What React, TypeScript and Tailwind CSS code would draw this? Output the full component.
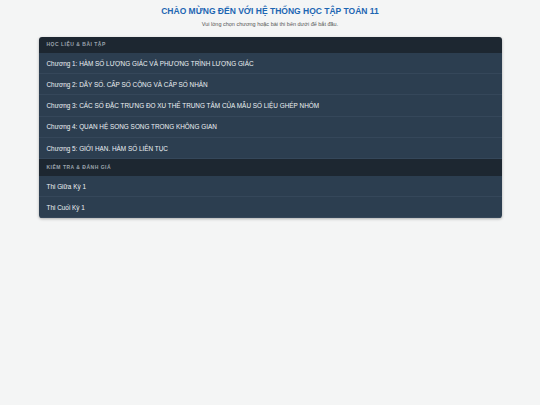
import React from "react";

const chapters = [
  "Chương 1: HÀM SỐ LƯỢNG GIÁC VÀ PHƯƠNG TRÌNH LƯỢNG GIÁC",
  "Chương 2: DÃY SỐ. CẤP SỐ CỘNG VÀ CẤP SỐ NHÂN",
  "Chương 3: CÁC SỐ ĐẶC TRƯNG ĐO XU THẾ TRUNG TÂM CỦA MẪU SỐ LIỆU GHÉP NHÓM",
  "Chương 4: QUAN HỆ SONG SONG TRONG KHÔNG GIAN",
  "Chương 5: GIỚI HẠN. HÀM SỐ LIÊN TỤC",
];
const exams = ["Thi Giữa Kỳ 1", "Thi Cuối Kỳ 1"];

function Header({ text, h }: { text: string; h: string }) {
  return (
    <div className={`${h} flex items-center px-[8px] bg-[#1d2731] text-[#9ba4ad] text-[5px] font-bold tracking-[0.1em] uppercase`}>
      {text}
    </div>
  );
}

function Row({ text }: { text: string }) {
  return (
    <div className="h-[21.2px] flex items-center px-[8px] pt-[1px] bg-[#2c3e50] text-[#eef2f5] text-[6.4px] border-b border-[#35475a]">
      {text}
    </div>
  );
}

export default function App() {
  return (
    <div
      className="w-[540px] h-[405px] bg-[#f4f5f5] flex flex-col items-center"
      style={{ fontFamily: '"Liberation Sans", Arial, sans-serif' }}
    >
      <h1 className="mt-[6px] text-[8.5px] leading-[11px] font-bold text-[#1d66b3]">
        CHÀO MỪNG ĐẾN VỚI HỆ THỐNG HỌC TẬP TOÁN 11
      </h1>
      <p className="mt-[3px] text-[5.5px] leading-[8px] text-[#555]">
        Vui lòng chọn chương hoặc bài thi bên dưới để bắt đầu.
      </p>
      <div className="mt-[9px] w-[463px] rounded-[3px] overflow-hidden shadow-[0_1px_3px_rgba(0,0,0,0.3)]">
        <Header text="Học liệu & Bài tập" h="h-[16px]" />
        {chapters.map((c) => (
          <Row key={c} text={c} />
        ))}
        <Header text="Kiểm tra & Đánh giá" h="h-[17px]" />
        {exams.map((c) => (
          <Row key={c} text={c} />
        ))}
      </div>
    </div>
  );
}
